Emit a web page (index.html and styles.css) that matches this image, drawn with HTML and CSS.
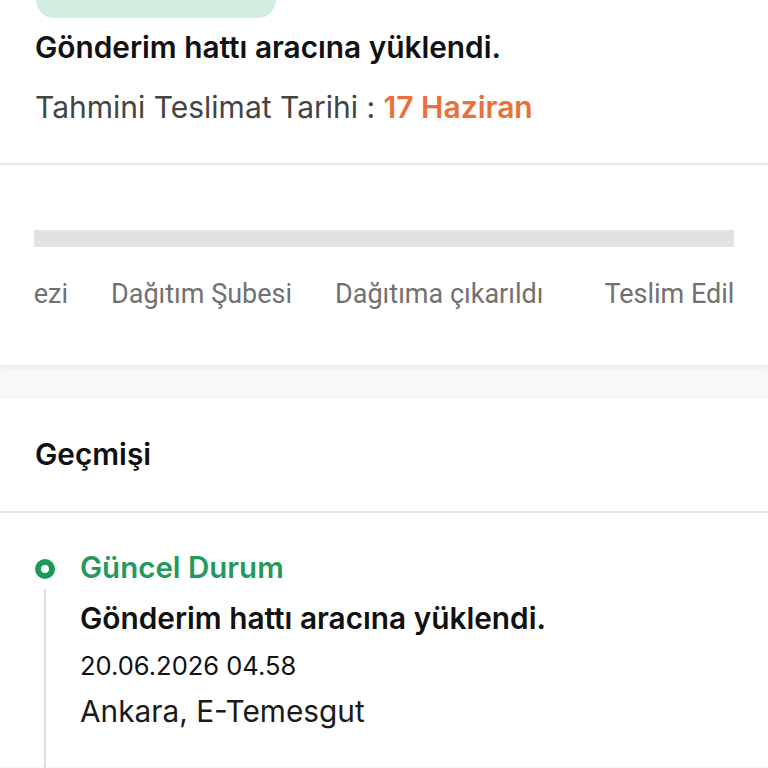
FILE: index.html
```html
<!DOCTYPE html>
<html lang="tr">
<head>
    <meta charset="UTF-8">
    <meta name="viewport" content="width=device-width, initial-scale=1.0">
    <title>Gönderi Takibi</title>
    <link rel="stylesheet" href="styles.css">
</head>
<body>

    <section class="summary">
        <div class="status-pill"></div>
        <h2 class="summary-title">Gönderim hattı aracına yüklendi.</h2>
        <p class="eta">Tahmini Teslimat Tarihi : <span class="eta-date">17 Haziran</span></p>
    </section>

    <section class="progress-card">
        <div class="progress-bar"></div>
        <div class="steps-window">
            <div class="steps">
                <span class="step first">Transfer Merkezi</span>
                <span class="step">Dağıtım Şubesi</span>
                <span class="step">Dağıtıma çıkarıldı</span>
                <span class="step last">Teslim Edildi</span>
            </div>
        </div>
    </section>

    <div class="gap"></div>

    <section class="history">
        <h3 class="history-title">Geçmişi</h3>

        <div class="timeline">
            <div class="event">
                <div class="event-marker">
                    <span class="ring"></span>
                    <span class="line"></span>
                </div>
                <div class="event-body">
                    <div class="event-label">Güncel Durum</div>
                    <div class="event-title">Gönderim hattı aracına yüklendi.</div>
                    <div class="event-date">20.06.2026 04.58</div>
                    <div class="event-place">Ankara, E-Temesgut</div>
                </div>
            </div>
        </div>
    </section>

</body>
</html>
```

FILE: styles.css
```css
/* General */
body {
    font-family: Inter, "Noto Sans", sans-serif;
    margin: 0;
    padding: 0;
    background: #f8f8f8;
    color: #111;
    height: 768px;
    overflow: hidden;
}

/* Summary */
.summary {
    background: white;
    padding: 0 35px;
    border-bottom: 2px solid #e6e6e6;
    height: 163px;
}

.status-pill {
    width: 240px;
    height: 18px;
    margin-left: 1px;
    background: #d3ede1;
    border-radius: 0 0 20px 20px;
}

.summary-title {
    margin: 10px 0 0;
    font-size: 29.8px;
    font-weight: 600;
    line-height: 38px;
}

.eta {
    margin: 22px 0 0;
    font-size: 30px;
    color: #444;
    line-height: 38px;
}

.eta-date {
    color: #e8703a;
    font-weight: 600;
}

/* Progress card */
.progress-card {
    background: white;
    height: 200px;
    padding: 0 34px;
    box-shadow: 0 3px 4px rgba(0, 0, 0, 0.06);
}

.progress-bar {
    position: relative;
    top: 65px;
    height: 17px;
    background: #e2e2e3;
}

.steps-window {
    overflow: hidden;
    margin-top: 95px;
}

.steps {
    display: flex;
    gap: 43px;
    white-space: nowrap;
}

.step {
    flex-shrink: 0;
    font-family: Roboto, sans-serif;
    font-size: 27px;
    color: #717171;
    line-height: 34px;
}

/* the first step is scrolled out to the left */
.step.first {
    flex: 0 0 34px;
    min-width: 0;
    display: flex;
    justify-content: flex-end;
}

.step.last {
    margin-left: 18px;
}

.gap {
    height: 34px;
}

/* History */
.history {
    background: white;
    height: 368px;
}

.history-title {
    box-sizing: border-box;
    margin: 0;
    padding: 36px 35px 0;
    font-size: 29.8px;
    font-weight: 600;
    line-height: 38px;
    height: 114px;
    border-bottom: 2px solid #e6e6e6;
}

.timeline {
    padding: 36px 35px 0;
}

.event {
    display: flex;
    gap: 25px;
}

.event-marker {
    width: 20px;
    display: flex;
    flex-direction: column;
    align-items: center;
}

.ring {
    margin-top: 10px;
    width: 8px;
    height: 8px;
    border: 6px solid #1c9a57;
    border-radius: 50%;
}

.line {
    width: 2px;
    height: 200px;
    margin-top: 10px;
    background: #dcdcdc;
}

.event-label {
    color: #23995b;
    font-size: 29.5px;
    font-weight: 600;
    line-height: 36px;
}

.event-title {
    margin-top: 15px;
    font-size: 29.8px;
    font-weight: 600;
    line-height: 36px;
}

.event-date {
    margin-top: 14px;
    font-size: 25.5px;
    line-height: 32px;
}

.event-place {
    margin-top: 11px;
    font-size: 29.8px;
    line-height: 36px;
    color: #1a1a1a;
}
```
